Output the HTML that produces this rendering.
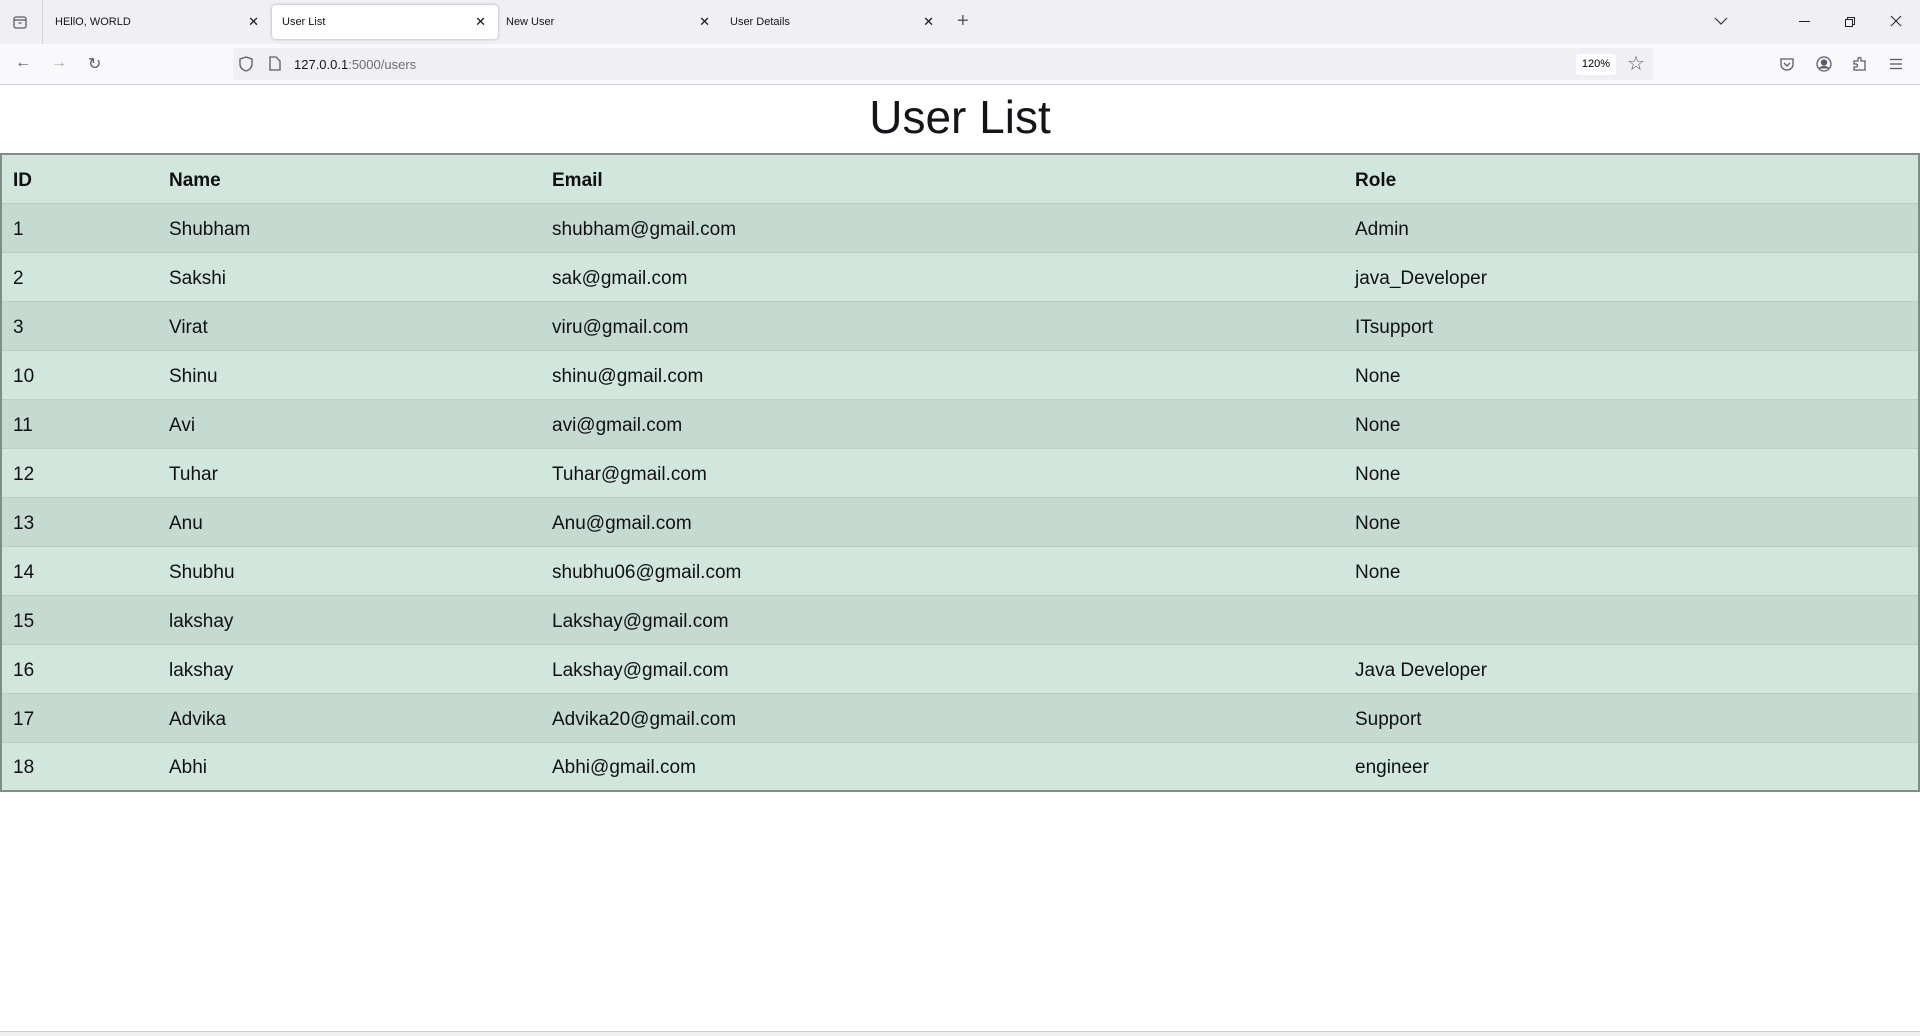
<!DOCTYPE html>
<html><head><meta charset="utf-8"><style>
*{box-sizing:border-box;margin:0;padding:0}
body{width:1920px;height:1036px;overflow:hidden;background:#fff;font-family:"Liberation Sans",sans-serif;position:relative}
.tabbar{position:absolute;left:0;top:0;width:1920px;height:44px;background:#f0f0f4}
.tab{position:absolute;top:5px;height:34px;width:226px;font-size:11px;color:#15141a;line-height:34px;padding-left:10px}
.tab .x{position:absolute;right:12px;top:0;font-size:13px}
.tab.active{background:#fff;border-radius:4px;box-shadow:0 0 3px rgba(0,0,0,.3)}
.nav{position:absolute;left:0;top:44px;width:1920px;height:41px;background:#f9f9fb;border-bottom:1px solid #cfcfd8}
.url{position:absolute;left:233px;top:4px;width:1420px;height:32px;background:#f0f0f4;border-radius:4px}
.ico{position:absolute;color:#5b5b66;font-size:16px}
h1{position:absolute;top:89px;left:0;width:1920px;text-align:center;font-weight:normal;font-size:46px;color:#15141a;line-height:56px}
table{position:absolute;left:0;top:153px;width:1920px;border-collapse:collapse;border:2px solid #7e8d86;font-size:19px;color:#111}
td,th{height:49px;padding-left:11px;padding-top:4px;text-align:left;border-bottom:1px solid #b9cfc5}
th{font-weight:bold}
tr:nth-child(odd){background:#d1e6dd}
tr:nth-child(even){background:#c5dad1}
.bottom{position:absolute;left:0;top:1031px;width:1920px;height:5px;border-top:1px solid #ccc;background:#f0f0f0}
</style></head><body>
<div class="tabbar">
<svg style="position:absolute;left:12px;top:14px" width="16" height="16" viewBox="0 0 16 16" fill="none" stroke="#5b5b66" stroke-width="1.3"><rect x="2" y="3" width="12" height="11" rx="2"/><line x1="2" y1="6" x2="14" y2="6"/><line x1="6.5" y1="9" x2="9.5" y2="9"/></svg>
<div style="position:absolute;left:42px;top:0;width:1px;height:44px;background:#d0d0d8"></div>
<div class="tab" style="left:45px">HEllO, WORLD<span class="x">✕</span></div>
<div class="tab active" style="left:272px">User List<span class="x">✕</span></div>
<div class="tab" style="left:496px">New User<span class="x">✕</span></div>
<div class="tab" style="left:720px">User Details<span class="x">✕</span></div>
<div class="ico" style="left:957px;top:10px;font-size:20px">+</div>
<svg style="position:absolute;left:1714px;top:16px" width="14" height="10"><polyline points="1,2 7,8 13,2" fill="none" stroke="#333" stroke-width="1.2"/></svg>
<div style="position:absolute;left:1799px;top:21px;width:11px;height:1px;background:#222"></div>
<svg style="position:absolute;left:1844px;top:16px" width="12" height="12" fill="none" stroke="#222"><rect x="1.5" y="3.5" width="7" height="7"/><polyline points="3.5,3.5 3.5,1.5 10.5,1.5 10.5,8.5 8.5,8.5"/></svg>
<svg style="position:absolute;left:1890px;top:15px" width="12" height="12" stroke="#222"><line x1="1" y1="1" x2="11" y2="11"/><line x1="11" y1="1" x2="1" y2="11"/></svg>
</div>
<div class="nav">
<div class="ico" style="left:15px;top:10px">←</div>
<div class="ico" style="left:51px;top:10px;color:#aaa">→</div>
<div class="ico" style="left:88px;top:10px">↻</div>
<div class="url">
<svg style="position:absolute;left:6px;top:8px" width="14" height="16" fill="none" stroke="#5b5b66" stroke-width="1.3"><path d="M7 1 L13 3 V8 C13 12 10 14 7 15 C4 14 1 12 1 8 V3 Z"/></svg>
<svg style="position:absolute;left:36px;top:8px" width="12" height="15" fill="none" stroke="#5b5b66" stroke-width="1.3"><path d="M1 1 H7 L11 5 V14 H1 Z"/></svg>
<div style="position:absolute;left:61px;top:9px;font-size:13px;color:#15141a">127.0.0.1<span style="color:#6e6e78">:5000/users</span></div>
<div style="position:absolute;left:1343px;top:6px;width:40px;height:21px;background:#fff;border-radius:3px;font-size:11px;line-height:21px;text-align:center">120%</div>
<div class="ico" style="left:1394px;top:3px;font-size:20px">☆</div>
</div>
<svg style="position:absolute;left:1779px;top:13px" width="16" height="15" fill="none" stroke="#5b5b66" stroke-width="1.3"><path d="M2 2 H14 V7 C14 11 11 13 8 13 C5 13 2 11 2 7 Z"/><polyline points="5,6 8,9 11,6"/></svg>
<svg style="position:absolute;left:1816px;top:12px" width="16" height="16" fill="none" stroke="#5b5b66" stroke-width="1.3"><circle cx="8" cy="8" r="7"/><circle cx="8" cy="6.5" r="2.5" fill="#5b5b66"/><path d="M3.5 12.5 C5 10 11 10 12.5 12.5" fill="#5b5b66"/></svg>
<svg style="position:absolute;left:1852px;top:12px" width="16" height="16" fill="none" stroke="#5b5b66" stroke-width="1.3"><path d="M2 5 H6 V3 C6 1 9 1 9 3 V5 H13 V14 H2 V11 H4 C6 11 6 8 4 8 H2 Z"/></svg>
<svg style="position:absolute;left:1889px;top:14px" width="14" height="12" stroke="#5b5b66" stroke-width="1.3"><line x1="1" y1="1.5" x2="13" y2="1.5"/><line x1="1" y1="6" x2="13" y2="6"/><line x1="1" y1="10.5" x2="13" y2="10.5"/></svg>
</div>
<h1>User List</h1>
<table>
<colgroup><col style="width:157px"><col style="width:383px"><col style="width:803px"><col></colgroup>
<tr><th>ID</th><th>Name</th><th>Email</th><th>Role</th></tr>
<tr><td>1</td><td>Shubham</td><td>shubham@gmail.com</td><td>Admin</td></tr>
<tr><td>2</td><td>Sakshi</td><td>sak@gmail.com</td><td>java_Developer</td></tr>
<tr><td>3</td><td>Virat</td><td>viru@gmail.com</td><td>ITsupport</td></tr>
<tr><td>10</td><td>Shinu</td><td>shinu@gmail.com</td><td>None</td></tr>
<tr><td>11</td><td>Avi</td><td>avi@gmail.com</td><td>None</td></tr>
<tr><td>12</td><td>Tuhar</td><td>Tuhar@gmail.com</td><td>None</td></tr>
<tr><td>13</td><td>Anu</td><td>Anu@gmail.com</td><td>None</td></tr>
<tr><td>14</td><td>Shubhu</td><td>shubhu06@gmail.com</td><td>None</td></tr>
<tr><td>15</td><td>lakshay</td><td>Lakshay@gmail.com</td><td></td></tr>
<tr><td>16</td><td>lakshay</td><td>Lakshay@gmail.com</td><td>Java Developer</td></tr>
<tr><td>17</td><td>Advika</td><td>Advika20@gmail.com</td><td>Support</td></tr>
<tr><td>18</td><td>Abhi</td><td>Abhi@gmail.com</td><td>engineer</td></tr>
</table>
<div class="bottom"></div>
</body></html>
